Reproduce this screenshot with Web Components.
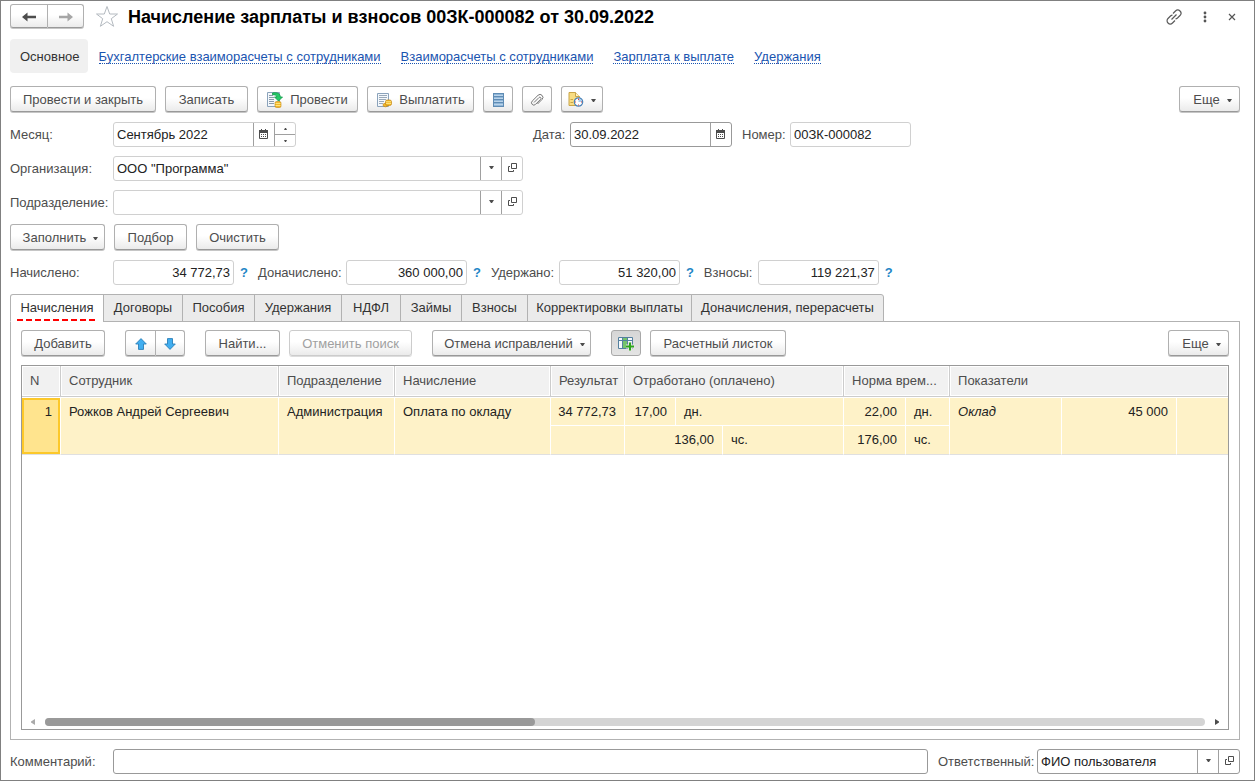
<!DOCTYPE html>
<html lang="ru">
<head>
<meta charset="utf-8">
<title>Начисление зарплаты и взносов</title>
<style>
html, body { margin: 0; height: 100%; }
body { font: 13px/16px "Liberation Sans", Arial, sans-serif; color: #4d4d4d; background: #fff; }
</style>
</head>
<body>
<payroll-document></payroll-document>

<script>
const ICONS = {
  back: [16, 12, '<path d="M1 6 6.500 1.500V4.800H15V7.200H6.500V10.500Z" fill="#4d4d4d"/>'],
  forward: [16, 12, '<path d="M15 6 9.500 1.500V4.800H1V7.200H9.500V10.500Z" fill="#a6a6a6"/>'],
  star: [24, 23, '<path d="M12 1.500 14.700 9H22.500L16.300 13.700 18.600 21.300 12 16.700 5.400 21.300 7.700 13.700 1.500 9H9.300Z" fill="#fff" stroke="#b4bac0"/>'],
  link: [16, 16, '<g fill="none" stroke="#5a5a5a" stroke-width="1.200"><path d="M7 4.500 9.500 2A3 3 0 0 1 14 6.500L11.500 9A3 3 0 0 1 9.500 9.800"/><path d="M9 11.500 6.500 14A3 3 0 0 1 2 9.500L4.500 7A3 3 0 0 1 6.500 6.200"/><path d="M5.500 10.500 10.500 5.500"/></g>'],
  dots: [4, 12, '<g fill="#555"><circle cx="2" cy="2" r="1.400"/><circle cx="2" cy="6" r="1.400"/><circle cx="2" cy="10" r="1.400"/></g>'],
  close: [8, 8, '<path d="M1 1 7 7M7 1 1 7" stroke="#555" stroke-width="1.200"/>'],
  caret: [5, 4, '<path d="M0 0H5L3 3H2Z" fill="#4d4d4d"/>'],
  post: [16, 16, '<path d="M.5.500H12.500V14.500H.5Z" fill="#f4f8fc" stroke="#8ba3bb"/><path d="M2 3.500H6M2 5.500H7M2 7.500H7M2 9.500H7M2 11.500H7" stroke="#8a9aaa"/><path d="M5.500 1C10 0 13.300 1.500 13.300 5H15.500L11.500 9 7.500 5H9.800C9.800 3.500 8.500 2.700 5.500 2.700Z" fill="#25c968" stroke="#109a48" stroke-width=".8"/><rect x="8" y="9.500" width="6" height="6" rx="1.500" fill="#f2b92a" stroke="#c48713" stroke-width=".6"/><path d="M8.500 11.500H13.500M8.500 13.500H13.500" stroke="#ffe37c"/>'],
  pay: [16, 16, '<path d="M1.500 1.500H12.500V14.500H1.500Z" fill="#f4f8fc" stroke="#8ba3bb"/><path d="M3 3.500H11M3 5.500H11M3 7.500H10M3 9.500H8M3 11.500H7" stroke="#9aa9b8"/><ellipse cx="9.500" cy="13" rx="2.500" ry="1.800" fill="#f2b92a" stroke="#c48713" stroke-width=".7"/><rect x="9.500" y="8" width="6" height="5.500" rx="1.800" fill="#f2b92a" stroke="#c48713" stroke-width=".7"/><path d="M10 9.700H15M10 11.500H15" stroke="#ffe37c"/>'],
  list: [11, 14, '<rect x=".5" y=".5" width="10" height="13" fill="#8fb6d8" stroke="#5f8cb4"/><path d="M1 2.500H10M1 5.500H10M1 8.500H10M1 11.500H10" stroke="#b9d3ea"/><path d="M1 3.500H10M1 6.500H10M1 9.500H10" stroke="#5f8cb4"/>'],
  clip: [14, 14, '<path d="M4 9.500 9 4.500A1.200 1.200 0 0 1 10.700 6.200L5.500 11.400A2.300 2.300 0 0 1 2.200 8.100L8 2.300A2.900 2.900 0 0 1 12.100 6.400L7.500 11" fill="none" stroke="#777"/>'],
  note: [16, 15, '<path d="M1 .5H7.500L11.500 4.500V13.500H1Z" fill="#f8dd83" stroke="#c9a548"/><path d="M7.500.500V4.500H11.500" fill="#fff3c4" stroke="#c9a548"/><path d="M2.500 7.500H5M2.500 10.500H5" stroke="#c9a548"/><circle cx="10.500" cy="10" r="4.200" fill="#fff" stroke="#4b83b8" stroke-width="1.200"/><path d="M10.500 10V6.500A3.500 3.500 0 0 1 14 10Z" fill="#a8cdee"/><path d="M10.500 6.500V8M10.500 12.500V13.500M7 10H8M13 10H14" stroke="#d34545"/>'],
  calendar: [10, 10, '<path d="M.5 1.500H8.500V9.500H.5Z" fill="#fff" stroke="#4d4d4d"/><path d="M0 1H9V4H0ZM2 0H3V1H2ZM6 0H7V1H6Z" fill="#4d4d4d"/><path d="M2 5.500H3M4 5.500H5M6 5.500H7M2 7.500H3M4 7.500H5M6 7.500H7" stroke="#4d4d4d"/>'],
  open: [9, 9, '<path d="M3.500.500H8.500V5.500H3.500Z" fill="none" stroke="#4d4d4d"/><path d="M2 3.500H.5V8.500H5.500V7" fill="none" stroke="#4d4d4d"/>'],
  up: [12, 12, '<path d="M6 .6 11.300 6H8.500V11.400H3.500V6H.7Z" fill="#41aef0" stroke="#2a7fb8" stroke-width=".9"/>'],
  down: [12, 12, '<path d="M6 11.400 11.300 6H8.500V.6H3.500V6H.7Z" fill="#41aef0" stroke="#2a7fb8" stroke-width=".9"/>'],
  columns: [17, 15, '<path d="M.5 1.500H14.500V12.500H.5Z" fill="#f4f8fb" stroke="#54809f"/><path d="M5 2H9V12H5Z" fill="#74c36b"/><path d="M1 4.500H14M4.500 2V12M9.500 2V12" stroke="#54809f"/><path d="M12 6V15M8 10.500H16.500" stroke="#e4e4e4" stroke-width="4"/><path d="M12 6.500V14.500M8 10.500H16" stroke="#2ea51d" stroke-width="2"/>'],
  left: [4, 6, '<path d="M4 0V6L0 3.500V2.500Z" fill="#aaa"/>'],
  right: [4, 6, '<path d="M0 0V6L4 3.500V2.500Z" fill="#4d4d4d"/>'],
  tiny_up: [3, 2, '<path d="M1 0H2L3 2H0Z" fill="#4d4d4d"/>'],
  tiny_down: [3, 2, '<path d="M0 0H3L2 2H1Z" fill="#4d4d4d"/>']
};

class UiElement extends HTMLElement {
  connectedCallback() {
    if (this.shadowRoot) return;
    this.attachShadow({ mode: 'open' }).innerHTML = this.render();
  }
  attr(name, fallback = '') { return this.getAttribute(name) ?? fallback; }
}

customElements.define('ui-icon', class extends UiElement {
  render() {
    const [w, h, body] = ICONS[this.attr('name')];
    return `<style>:host{display:inline-flex;flex:none}svg{display:block}</style>
      <svg width="${w}" height="${h}" viewBox="0 0 ${w} ${h}" aria-hidden="true">${body}</svg>`;
  }
});

customElements.define('ui-button', class extends UiElement {
  render() {
    const icon = this.attr('icon');
    return `<style>
      :host{display:block;flex:none;width:var(--w,auto)}
      button{box-sizing:border-box;width:100%;height:var(--h,26px);margin:0 0 1px;padding:1px 0 0;display:flex;align-items:center;justify-content:center;gap:7px;
        font:inherit;color:#4d4d4d;white-space:nowrap;border:1px solid #b0b0b0;border-bottom-color:#999;border-radius:3px;
        background:linear-gradient(#fff 45%,#ebebeb);box-shadow:0 1px 0 #c6c6c6}
      :host([disabled]) button{color:#a0a0a0;border-color:#ccc;box-shadow:0 1px 0 #ddd}
      :host([pressed]) button{background:linear-gradient(#d6d6d6,#e4e4e4);border-color:#a8a8a8;box-shadow:none}
      :host([joined=start]) button{border-radius:3px 0 0 3px}
      :host([joined=end]) button{border-radius:0 3px 3px 0;border-left:0}
      .caret{margin-top:2px;margin-right:-6px}
      :host([tight]) .caret{margin-right:0}
    </style>
    <button type="button" ${this.hasAttribute('disabled') ? 'disabled' : ''} aria-label="${this.attr('label', this.textContent.trim())}">
      ${icon ? `<ui-icon name="${icon}"></ui-icon>` : ''}${this.textContent.trim() ? '<span><slot></slot></span>' : ''}
      ${this.hasAttribute('menu') ? '<ui-icon class="caret" name="caret"></ui-icon>' : ''}
    </button>`;
  }
});

customElements.define('ui-field', class extends UiElement {
  render() {
    const tools = this.attr('tools').split(' ').filter(Boolean).map(t => t === 'spin'
      ? '<span class="spin"><button type="button" aria-label="Больше"><ui-icon name="tiny_up"></ui-icon></button><button type="button" aria-label="Меньше"><ui-icon name="tiny_down"></ui-icon></button></span>'
      : `<button type="button" class="tool" aria-label="${t}"><ui-icon name="${t}"></ui-icon></button>`).join('');
    return `<style>
      :host{display:flex;align-items:center;min-width:0}
      label{flex:none;width:var(--label,auto);white-space:nowrap}
      .box{box-sizing:border-box;flex:var(--grow,none);width:var(--w);min-width:0;height:25px;display:flex;border:1px solid #d0d0d0;border-radius:3px;background:#fff;overflow:hidden}
      :host([strong]) .box{border-color:#999}
      input{flex:1;min-width:0;width:0;margin:0;padding:0 3px;border:0;outline:0;background:none;font:inherit;color:#222}
      :host([numeric]) input{text-align:right}
      button{margin:0;padding:0;border:0;background:none;display:flex;align-items:center;justify-content:center}
      .tool{flex:none;width:21px;box-sizing:border-box;border-left:1px solid #a0a0a0;padding-bottom:2px}
      .spin{flex:none;box-sizing:border-box;width:21px;display:grid;grid-template-rows:11px 11px;row-gap:1px;border-left:1px solid #a0a0a0;background:linear-gradient(#a0a0a0,#a0a0a0) 0 11px/100% 1px no-repeat}
      .help{padding:0 0 0 6px;font:bold 13px/16px "Liberation Sans",Arial,sans-serif;color:#1f86c6}
    </style>
    <label for="f">${this.attr('label')}</label>
    <div class="box"><input id="f" type="text" value='${this.attr('value')}'>${tools}</div>
    ${this.hasAttribute('help') ? '<button type="button" class="help">?</button>' : ''}`;
  }
});

customElements.define('ui-row', class extends UiElement {
  render() {
    return `<style>
      :host{display:flex;align-items:center;gap:9px}
      ::slotted(.push){margin-left:auto}
      ::slotted(.apart){margin-left:11px}
    </style><slot></slot>`;
  }
});

customElements.define('window-header', class extends UiElement {
  render() {
    return `<style>
      :host{display:flex;align-items:center;height:29px}
      .nav{display:flex;margin-right:11px;--h:24px}
      h1{margin:0 0 0 9px;font:bold 18px/24px "Liberation Sans",Arial,sans-serif;color:#000;white-space:nowrap;flex:1}
      .plain{margin:0;padding:0;border:0;background:none;display:flex}
      .tools{display:flex;align-items:center;gap:21px;padding-right:4px}
    </style>
    <div class="nav">
      <ui-button joined="start" icon="back" label="Назад" style="--w:38px"></ui-button>
      <ui-button joined="end" icon="forward" label="Вперед" style="--w:36px"></ui-button>
    </div>
    <button type="button" class="plain" aria-label="В избранное"><ui-icon name="star"></ui-icon></button>
    <h1><slot></slot></h1>
    <div class="tools">
      <button type="button" class="plain" aria-label="Ссылка"><ui-icon name="link"></ui-icon></button>
      <button type="button" class="plain" aria-label="Меню"><ui-icon name="dots"></ui-icon></button>
      <button type="button" class="plain" aria-label="Закрыть"><ui-icon name="close"></ui-icon></button>
    </div>`;
  }
});

customElements.define('section-links', class extends UiElement {
  render() {
    return `<style>
      :host{display:block}
      nav{display:flex;align-items:center;gap:20px}
      a{color:#1a54b0;text-decoration:none;border-bottom:1px dotted #1a54b0;padding-top:2px;line-height:13px;white-space:nowrap}
      a.current{color:#333;border:0;background:#f0f0f0;border-radius:4px;line-height:14px;padding:11px 8px 9px 10px;margin-right:-9px}
    </style>
    <nav>
      <a class="current" href="#main">Основное</a>
      <a href="#accounting">Бухгалтерские взаиморасчеты с сотрудниками</a>
      <a href="#settlements">Взаиморасчеты с сотрудниками</a>
      <a href="#payout">Зарплата к выплате</a>
      <a href="#deductions">Удержания</a>
    </nav>`;
  }
});

customElements.define('ui-tabs', class extends UiElement {
  render() {
    const tabs = this.attr('items').split('|').map((t, i) => {
      const [text, width] = t.split(':');
      return `<button type="button" role="tab" aria-selected="${i === 0}" style="min-width:${width}px"><span>${text}</span></button>`;
    }).join('');
    return `<style>
      :host{display:flex;flex-direction:column;min-height:0}
      .bar{display:flex;margin-bottom:-1px;position:relative}
      button{box-sizing:border-box;height:28px;margin:0 0 0 -1px;padding:0 6px;border:1px solid #b2b2b2;background:#ebebeb;font:inherit;color:#333;white-space:nowrap;display:flex;align-items:center;justify-content:center}
      button:first-child{margin:0;border-bottom-color:#fff;background:#fff;border-radius:3px 0 0 0}
      button:last-child{border-radius:0 3px 0 0}
      button:first-child span{height:26px;box-sizing:border-box;padding:5px 3px 0;background:repeating-linear-gradient(90deg,#f00 0 6px,#fff 6px 9px) 0 24px/100% 2px no-repeat}
      .panel{flex:1;display:flex;flex-direction:column;border:1px solid #b2b2b2;padding:8px 10px 9px}
    </style>
    <div class="bar" role="tablist">${tabs}</div>
    <div class="panel" role="tabpanel"><slot></slot></div>`;
  }
});

customElements.define('accrual-table', class extends UiElement {
  render() {
    return `<style>
      :host{display:flex;flex-direction:column;flex:1;border:1px solid #999;overflow:hidden}
      table{width:100%;table-layout:fixed;border-collapse:separate;border-spacing:0}
      th,td{box-sizing:border-box;padding:0 8px;white-space:nowrap;overflow:hidden;text-overflow:ellipsis;text-align:left;font-weight:normal}
      th{height:31px;padding-right:4px;background:#f1f1f1;border-right:1px solid #ccc;border-bottom:1px solid #ccc;box-shadow:inset 0 0 0 1px #fff}
      td{height:28px;vertical-align:top;padding-top:6px;background:#fef2c8;color:#222;border-right:1px solid #fff;border-bottom:1px solid #fff}
      td[rowspan],.last td{border-bottom-color:#e0e0e0}
      tbody tr:first-child td{border-top:1px solid #fff;height:29px}
      .last td{height:29px}
      th:last-child,td.end{border-right:0}
      .n{text-align:right}
      tbody td.n{padding-left:2px}
      td.active{background:#ffe48e;box-shadow:inset 0 0 0 2px #fcc82a}
      .scroll{margin-top:auto;display:flex;align-items:center;gap:10px;padding:0 9px 3px 9px;height:8px}
      .track{flex:1;height:8px;border-radius:4px;background:#d4d4d4}
      .thumb{width:490px;max-width:60%;height:8px;border-radius:4px;background:#999}
    </style>
    <table>
      <colgroup><col style="width:39px"><col style="width:218px"><col style="width:116px"><col style="width:156px"><col style="width:74px"><col style="width:51px"><col style="width:47px"><col style="width:121px"><col style="width:62px"><col style="width:44px"><col style="width:112px"><col style="width:115px"><col></colgroup>
      <thead><tr><th>N</th><th>Сотрудник</th><th>Подразделение</th><th>Начисление</th><th>Результат</th><th colspan="3">Отработано (оплачено)</th><th colspan="2">Норма врем...</th><th colspan="3">Показатели</th></tr></thead>
      <tbody>
        <tr><td class="n active" rowspan="2">1</td><td rowspan="2">Рожков Андрей Сергеевич</td><td rowspan="2">Администрация</td><td rowspan="2">Оплата по окладу</td><td class="n">34 772,73</td><td class="n">17,00</td><td colspan="2">дн.</td><td class="n">22,00</td><td>дн.</td><td rowspan="2"><i>Оклад</i></td><td class="n" rowspan="2">45 000</td><td class="end" rowspan="2"></td></tr>
        <tr class="last"><td></td><td class="n" colspan="2">136,00</td><td>чс.</td><td class="n">176,00</td><td>чс.</td></tr>
      </tbody>
    </table>
    <div class="scroll"><ui-icon name="left"></ui-icon><div class="track"><div class="thumb"></div></div><ui-icon name="right"></ui-icon></div>`;
  }
});

customElements.define('payroll-document', class extends UiElement {
  render() {
    return `<style>
      :host{display:flex;flex-direction:column;box-sizing:border-box;min-height:100vh;border:1px solid #808080;padding:1px 14px 6px 9px}
      section-links{margin-top:8px}
      .commands{margin-top:13px}
      .form{display:grid;grid-template-columns:513px auto;gap:9px 10px;margin-top:9px;justify-content:start}
      .form ui-field,.totals ui-field:first-child{--label:103px}
      .inline{display:flex;gap:10px}
      .wide{grid-column:1}
      .fill{margin-top:9px}
      .totals{display:flex;gap:10px;margin-top:9px}
      ui-tabs{flex:1;margin-top:9px}
      accrual-table{margin-top:8px}
      .footer{display:flex;gap:10px;margin-top:9px}
      .footer ui-field:first-child{flex:1;--label:103px;--grow:1}
    </style>
    <window-header>Начисление зарплаты и взносов 00ЗК-000082 от 30.09.2022</window-header>
    <section-links></section-links>
    <ui-row class="commands">
      <ui-button style="--w:146px">Провести и закрыть</ui-button>
      <ui-button style="--w:83px">Записать</ui-button>
      <ui-button style="--w:101px" icon="post">Провести</ui-button>
      <ui-button style="--w:107px" icon="pay">Выплатить</ui-button>
      <ui-button style="--w:30px" icon="list" label="Список"></ui-button>
      <ui-button style="--w:30px" icon="clip" label="Файлы"></ui-button>
      <ui-button style="--w:42px" icon="note" label="Напоминание" menu tight></ui-button>
      <ui-button class="push" style="--w:61px" menu>Еще</ui-button>
    </ui-row>
    <div class="form">
      <ui-field label="Месяц:" value="Сентябрь 2022" tools="calendar spin" style="--w:183px"></ui-field>
      <div class="inline">
        <ui-field label="Дата:" value="30.09.2022" tools="calendar" strong style="--label:37px;--w:162px"></ui-field>
        <ui-field label="Номер:" value="00ЗК-000082" style="--label:48px;--w:121px"></ui-field>
      </div>
      <ui-field class="wide" label="Организация:" value='ООО &amp;quot;Программа&amp;quot;' tools="caret open" style="--w:410px"></ui-field>
      <ui-field class="wide" label="Подразделение:" tools="caret open" style="--w:410px"></ui-field>
    </div>
    <ui-row class="fill">
      <ui-button style="--w:95px" menu>Заполнить</ui-button>
      <ui-button style="--w:73px">Подбор</ui-button>
      <ui-button style="--w:83px">Очистить</ui-button>
    </ui-row>
    <div class="totals">
      <ui-field label="Начислено:" value="34 772,73" numeric help style="--w:121px"></ui-field>
      <ui-field label="Доначислено:" value="360 000,00" numeric help style="--label:88px;--w:121px"></ui-field>
      <ui-field label="Удержано:" value="51 320,00" numeric help style="--label:68px;--w:121px"></ui-field>
      <ui-field label="Взносы:" value="119 221,37" numeric help style="--label:54px;--w:121px"></ui-field>
    </div>
    <ui-tabs items="Начисления:94|Договоры:80|Пособия:73|Удержания:88|НДФЛ:60|Займы:62|Взносы:67|Корректировки выплаты:165|Доначисления, перерасчеты:193">
      <ui-row>
        <ui-button style="--w:84px">Добавить</ui-button>
        <div class="apart" style="display:flex">
          <ui-button joined="start" icon="up" label="Вверх" style="--w:31px"></ui-button>
          <ui-button joined="end" icon="down" label="Вниз" style="--w:29px"></ui-button>
        </div>
        <ui-button class="apart" style="--w:75px">Найти...</ui-button>
        <ui-button disabled style="--w:123px">Отменить поиск</ui-button>
        <ui-button class="apart" menu style="--w:159px">Отмена исправлений</ui-button>
        <ui-button class="apart" pressed icon="columns" label="Показатели" style="--w:30px"></ui-button>
        <ui-button style="--w:136px">Расчетный листок</ui-button>
        <ui-button class="push" menu style="--w:61px">Еще</ui-button>
      </ui-row>
      <accrual-table></accrual-table>
    </ui-tabs>
    <div class="footer">
      <ui-field label="Комментарий:" strong></ui-field>
      <ui-field label="Ответственный:" value="ФИО пользователя" tools="caret open" strong style="--label:99px;--w:203px"></ui-field>
    </div>`;
  }
});
</script>
</body>
</html>
